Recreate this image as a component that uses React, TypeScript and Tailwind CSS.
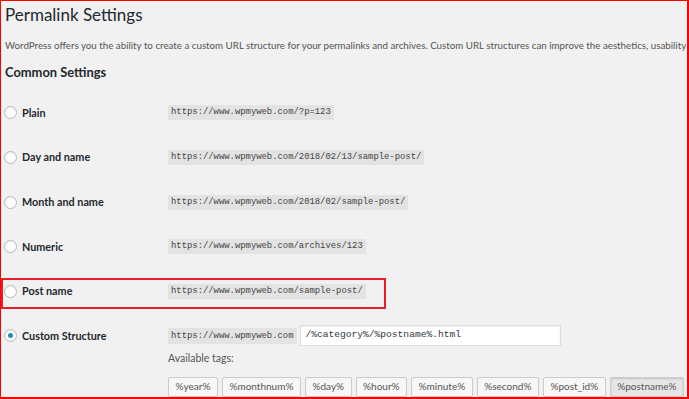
import React from "react";

const rows = [
  { label: "Plain", url: "https://www.wpmyweb.com/?p=123" },
  { label: "Day and name", url: "https://www.wpmyweb.com/2018/02/13/sample-post/" },
  { label: "Month and name", url: "https://www.wpmyweb.com/2018/02/sample-post/" },
  { label: "Numeric", url: "https://www.wpmyweb.com/archives/123" },
  { label: "Post name", url: "https://www.wpmyweb.com/sample-post/" },
];

const tags = ["%year%", "%monthnum%", "%day%", "%hour%", "%minute%", "%second%", "%post_id%", "%postname%"];

const sans = "font-['Lato','Open_Sans',sans-serif]";
const mono = "font-['Liberation_Mono','DejaVu_Sans_Mono',monospace]";

function Radio({ checked }: { checked?: boolean }) {
  return (
    <span className="flex h-[13px] w-[13px] shrink-0 items-center justify-center rounded-full border border-[#b4b9be] bg-white shadow-[inset_0_1px_2px_rgba(0,0,0,0.07)]">
      {checked && <span className="h-[5px] w-[5px] rounded-full bg-[#1e8cbe]" />}
    </span>
  );
}

export default function App() {
  return (
    <div className={`relative h-[399px] w-[689px] overflow-hidden border-t border-l border-r-2 border-b-2 border-[#ff0000] bg-[#f1f1f1] ${sans} text-[#23282d]`}>
      <div className="h-full border-r border-[#f9f9f9] pl-[3px]">
        <div className="ml-[1px] h-[31px] text-[17px] leading-[28px] text-[#23282d]">Permalink Settings</div>
        <div className="ml-[1px] h-[26px] overflow-hidden whitespace-nowrap text-[9.75px] leading-[26px] text-[#555]">
          WordPress offers you the ability to create a custom URL structure for your permalinks and archives. Custom URL structures can improve the aesthetics, usability, and forward-compatibility of your links.
        </div>
        <div className="ml-[1px] h-[32.7px] text-[12.9px] font-bold leading-[28px] text-[#23282d]">Common Settings</div>
        {rows.map((r) => (
          <div key={r.label} className="flex h-[44.6px] items-center">
            <div className="flex w-[164px] shrink-0 items-center gap-[5px]">
              <Radio />
              <span className="text-[10.8px] font-bold text-[#23282d]">{r.label}</span>
            </div>
            <code className={`${mono} bg-[#e3e3e3] px-[3px] text-[8.9px] leading-[15px] text-[#444]`}>{r.url}</code>
          </div>
        ))}
        <div className="flex items-start pt-[11px]">
          <div className="flex h-[22px] w-[164px] shrink-0 items-center gap-[5px]">
            <Radio checked />
            <span className="whitespace-nowrap text-[10.8px] font-bold text-[#23282d]">Custom Structure</span>
          </div>
          <div className="flex flex-col">
            <div className="flex h-[22px] items-center gap-[3px]">
              <code className={`${mono} bg-[#e3e3e3] px-[3px] text-[8.9px] leading-[16px] text-[#444]`}>https://www.wpmyweb.com</code>
              <div className={`flex h-[21px] w-[261px] items-center border border-[#dddddd] bg-white px-[5px] shadow-[inset_0_1px_2px_rgba(0,0,0,0.07)] ${mono} text-[9.6px] text-[#32373c]`}>
                /%category%/%postname%.html
              </div>
            </div>
            <div className="h-[22px] text-[10.5px] leading-[22px] text-[#555]">Available tags:</div>
            <div className="mt-[8px] flex gap-[4px]">
              {tags.map((t, i) => (
                <span
                  key={t}
                  className={`flex h-[20px] shrink-0 items-center rounded-[2px] border border-[#cccccc] px-[6.5px] text-[10px] text-[#555] ${
                    i === tags.length - 1 ? "bg-[#e6e6e6] shadow-[inset_0_1px_2px_rgba(0,0,0,0.15)]" : "bg-[#f7f7f7]"
                  }`}
                >
                  {t}
                </span>
              ))}
            </div>
          </div>
        </div>
      </div>
      <div className="absolute left-[0px] top-[277px] h-[31px] w-[385px] border-2 border-[#e3202c]" />
    </div>
  );
}
